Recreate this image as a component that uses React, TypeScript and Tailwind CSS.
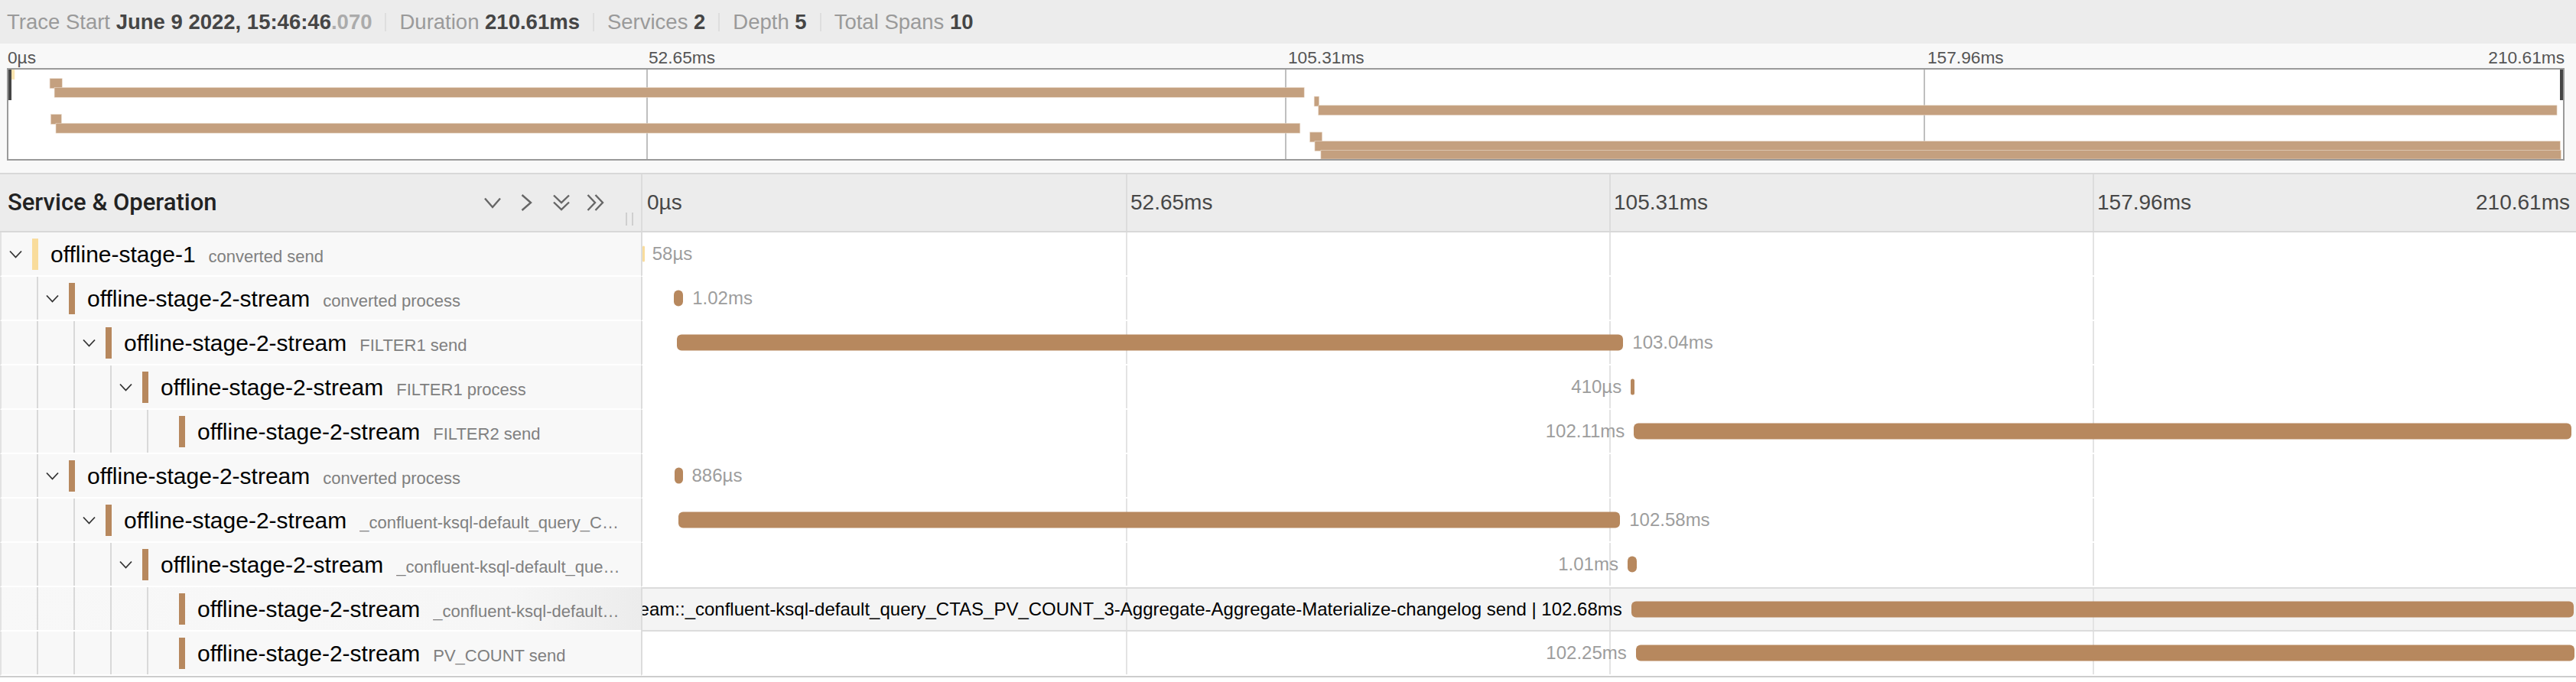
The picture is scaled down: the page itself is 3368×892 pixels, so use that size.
import React from "react";

const TOTAL = 210.61;

type Span = {
  service: string;
  op: string;
  depth: number;
  start: number;
  dur: number;
  root?: boolean;
  kids: boolean;
  label: string;
  labelLeft?: boolean;
  hovered?: boolean;
};

const spans: Span[] = [
  { service: "offline-stage-1", op: "converted send", depth: 0, start: 0, dur: 0.058, root: true, kids: true, label: "58µs" },
  { service: "offline-stage-2-stream", op: "converted process", depth: 1, start: 3.41, dur: 1.02, kids: true, label: "1.02ms" },
  { service: "offline-stage-2-stream", op: "FILTER1 send", depth: 2, start: 3.79, dur: 103.04, kids: true, label: "103.04ms" },
  { service: "offline-stage-2-stream", op: "FILTER1 process", depth: 3, start: 107.65, dur: 0.41, kids: true, label: "410µs", labelLeft: true },
  { service: "offline-stage-2-stream", op: "FILTER2 send", depth: 4, start: 108.0, dur: 102.11, kids: false, label: "102.11ms", labelLeft: true },
  { service: "offline-stage-2-stream", op: "converted process", depth: 1, start: 3.49, dur: 0.886, kids: true, label: "886µs" },
  { service: "offline-stage-2-stream", op: "_confluent-ksql-default_query_C…", depth: 2, start: 3.91, dur: 102.58, kids: true, label: "102.58ms" },
  { service: "offline-stage-2-stream", op: "_confluent-ksql-default_que…", depth: 3, start: 107.3, dur: 1.01, kids: true, label: "1.01ms", labelLeft: true },
  {
    service: "offline-stage-2-stream",
    op: "_confluent-ksql-default…",
    depth: 4,
    start: 107.7,
    dur: 102.68,
    kids: false,
    label:
      "offline-stage-2-stream::_confluent-ksql-default_query_CTAS_PV_COUNT_3-Aggregate-Aggregate-Materialize-changelog send | 102.68ms",
    labelLeft: true,
    hovered: true,
  },
  { service: "offline-stage-2-stream", op: "PV_COUNT send", depth: 4, start: 108.2, dur: 102.25, kids: false, label: "102.25ms", labelLeft: true },
];

function Sep() {
  return <div className="mx-[17px] h-[24px] w-[2px] shrink-0 bg-[#dedede]" />;
}

function RowChevron() {
  return (
    <svg width="17" height="11" viewBox="0 0 17 11" className="block">
      <polyline points="1,1.5 8.5,9.5 16,1.5" fill="none" stroke="#333" strokeWidth="1.8" />
    </svg>
  );
}

function HeaderIcons() {
  return (
    <div className="ml-auto flex items-center">
      <svg width="22" height="15" viewBox="0 0 22 15" className="block">
        <polyline points="1,1.5 11,13 21,1.5" fill="none" stroke="#666" strokeWidth="2.4" />
      </svg>
      <svg width="15" height="22" viewBox="0 0 15 22" className="ml-[26px] block">
        <polyline points="1.5,1 13,11 1.5,21" fill="none" stroke="#666" strokeWidth="2.4" />
      </svg>
      <svg width="22" height="22" viewBox="0 0 22 22" className="ml-[27px] block">
        <polyline points="1,1.5 11,11 21,1.5" fill="none" stroke="#666" strokeWidth="2.4" />
        <polyline points="1,10.5 11,20 21,10.5" fill="none" stroke="#666" strokeWidth="2.4" />
      </svg>
      <svg width="24" height="22" viewBox="0 0 24 22" className="ml-[22px] block">
        <polyline points="1.5,1 11,11 1.5,21" fill="none" stroke="#666" strokeWidth="2.4" />
        <polyline points="11.5,1 21,11 11.5,21" fill="none" stroke="#666" strokeWidth="2.4" />
      </svg>
    </div>
  );
}

function Minimap() {
  const W = 3340;
  const H = 117;
  const rh = H / spans.length;
  return (
    <div className="bg-[#f8f8f8] pb-[16px] pl-[9px] pr-[15px] pt-[5px]">
      <div className="grid h-[27px] grid-cols-4 items-center text-[22.7px] leading-none text-[#555]">
        <span className="pl-[1px]">0µs</span>
        <span className="pl-[3px]">52.65ms</span>
        <span className="pl-[3px]">105.31ms</span>
        <div className="flex justify-between pl-[3px]">
          <span>157.96ms</span>
          <span>210.61ms</span>
        </div>
      </div>
      <div className="h-[121px] border-2 border-[#9a9a9a] bg-white">
        <svg className="block h-full w-full" viewBox={`0 0 ${W} ${H}`} preserveAspectRatio="none">
          <line x1={835} y1={0} x2={835} y2={H} stroke="#aaa" strokeWidth="1.5" />
          <line x1={1670} y1={0} x2={1670} y2={H} stroke="#aaa" strokeWidth="1.5" />
          <line x1={2505} y1={0} x2={2505} y2={H} stroke="#aaa" strokeWidth="1.5" />
          {spans.map((s, i) => {
            const x = (s.start / TOTAL) * W;
            const w = Math.max((s.dur / TOTAL) * W, 4);
            return (
              <rect
                key={i}
                x={x + (s.root ? 4 : 0)}
                y={i * rh}
                width={w}
                height={Math.min(rh + 1.2, H - i * rh)}
                fill={s.root ? "#fae3ad" : "#c4a07f"}
                stroke={s.root ? "#fcebc6" : "#eadbcc"}
                strokeWidth="0.6"
              />
            );
          })}
          <rect x={0} y={0} width={4} height={40} fill="#454545" />
          <rect x={W - 4} y={0} width={4} height={40} fill="#454545" />
        </svg>
      </div>
    </div>
  );
}

function Row({ s }: { s: Span }) {
  const startPct = (s.start / TOTAL) * 100;
  const endPct = ((s.start + s.dur) / TOTAL) * 100;
  const widthPct = (s.dur / TOTAL) * 100;
  const labelStyle: React.CSSProperties = s.labelLeft
    ? { right: `calc(${100 - startPct}% + 12px)` }
    : { left: `calc(${endPct}% + 12px)` };
  return (
    <div className="flex h-[58px]">
      <div
        className={`flex w-[838px] shrink-0 border-b-2 border-l-2 border-b-white border-l-[#e2e2e2] ${
          s.hovered ? "bg-linear-to-r from-[#f8f8f8] via-[#f6f6f6] via-80% to-[#ececec]" : "bg-[#f8f8f8]"
        }`}
      >
        {Array.from({ length: s.depth }).map((_, k) => (
          <div key={k} className="h-full w-[48px] shrink-0 border-r-2 border-[#d9d9d9]" />
        ))}
        <div className="flex w-[40px] shrink-0 items-center pl-[10px]">{s.kids && <RowChevron />}</div>
        <div className={`h-[41px] w-[8px] shrink-0 self-center ${s.root ? "bg-[#f9dc9c]" : "bg-[#b7885e]"}`} />
        <div className="ml-[16px] flex min-w-0 flex-1 items-baseline self-center overflow-hidden whitespace-nowrap pr-[2px]">
          <span className="shrink-0 text-[30px] text-black">{s.service}</span>
          <span className="ml-[17px] min-w-0 overflow-hidden text-[22px] text-[#808080]">{s.op}</span>
        </div>
      </div>
      <div
        className={`relative flex-1 overflow-hidden border-b-2 border-l-2 border-l-[#dcdcdc] ${
          s.hovered ? "border-t-2 border-t-[#dcdcdc] border-b-[#dcdcdc] bg-[#f4f4f4]" : "border-b-white bg-white"
        }`}
      >
        <div className="absolute inset-0 grid grid-cols-4">
          <div />
          <div className="border-l-2 border-[#e3e3e3]" />
          <div className="border-l-2 border-[#e3e3e3]" />
          <div className="border-l-2 border-[#e3e3e3]" />
        </div>
        <div
          className={`absolute top-1/2 h-[21px] min-w-[3px] -translate-y-1/2 rounded-[6px] ${
            s.root ? "bg-[#f9dc9c]" : "bg-[#b7885e]"
          }`}
          style={{ left: `${startPct}%`, width: `${widthPct}%` }}
        />
        <div
          className={`absolute top-1/2 -translate-y-1/2 whitespace-nowrap text-[24px] leading-none ${
            s.hovered ? "text-black" : "text-[#9d9d9d]"
          }`}
          style={labelStyle}
        >
          {s.label}
        </div>
      </div>
    </div>
  );
}

export default function App() {
  return (
    <div className="h-[892px] w-[3368px] overflow-hidden bg-white font-['Liberation_Sans',Arial,sans-serif]">
      <div className="flex h-[57px] items-center whitespace-nowrap bg-[#ececec] pl-[9px] text-[27.5px] text-[#9a9a9a]">
        <span>
          Trace Start{" "}
          <b className="font-bold text-[#454545]">
            June 9 2022, 15:46:46<span className="text-[#ababab]">.070</span>
          </b>
        </span>
        <Sep />
        <span>
          Duration <b className="font-bold text-[#454545]">210.61ms</b>
        </span>
        <Sep />
        <span>
          Services <b className="font-bold text-[#454545]">2</b>
        </span>
        <Sep />
        <span>
          Depth <b className="font-bold text-[#454545]">5</b>
        </span>
        <Sep />
        <span>
          Total Spans <b className="font-bold text-[#454545]">10</b>
        </span>
      </div>

      <Minimap />

      <div className="flex h-[78px] border-y-2 border-[#d8d8d8] bg-[#ececec]">
        <div className="relative flex w-[838px] shrink-0 items-center pl-[10px] pr-[47px]">
          <span className="font-['Roboto',sans-serif] text-[31px] font-medium text-[#222]">Service &amp; Operation</span>
          <HeaderIcons />
          <div className="absolute bottom-[7px] right-[10px] flex h-[17px] gap-[6px]">
            <div className="w-[2px] bg-[#cfcfcf]" />
            <div className="w-[2px] bg-[#cfcfcf]" />
          </div>
        </div>
        <div className="grid flex-1 grid-cols-4 items-stretch border-l-2 border-[#dcdcdc] text-[28px] text-[#474747]">
          <div className="flex items-center pl-[6px]">0µs</div>
          <div className="flex items-center border-l-2 border-[#dcdcdc] pl-[4px]">52.65ms</div>
          <div className="flex items-center border-l-2 border-[#dcdcdc] pl-[4px]">105.31ms</div>
          <div className="flex items-center justify-between border-l-2 border-[#dcdcdc] pl-[4px] pr-[8px]">
            <span>157.96ms</span>
            <span>210.61ms</span>
          </div>
        </div>
      </div>

      <div className="border-b-2 border-[#cdcdcd]">
        {spans.map((s, i) => (
          <Row key={i} s={s} />
        ))}
      </div>
    </div>
  );
}
